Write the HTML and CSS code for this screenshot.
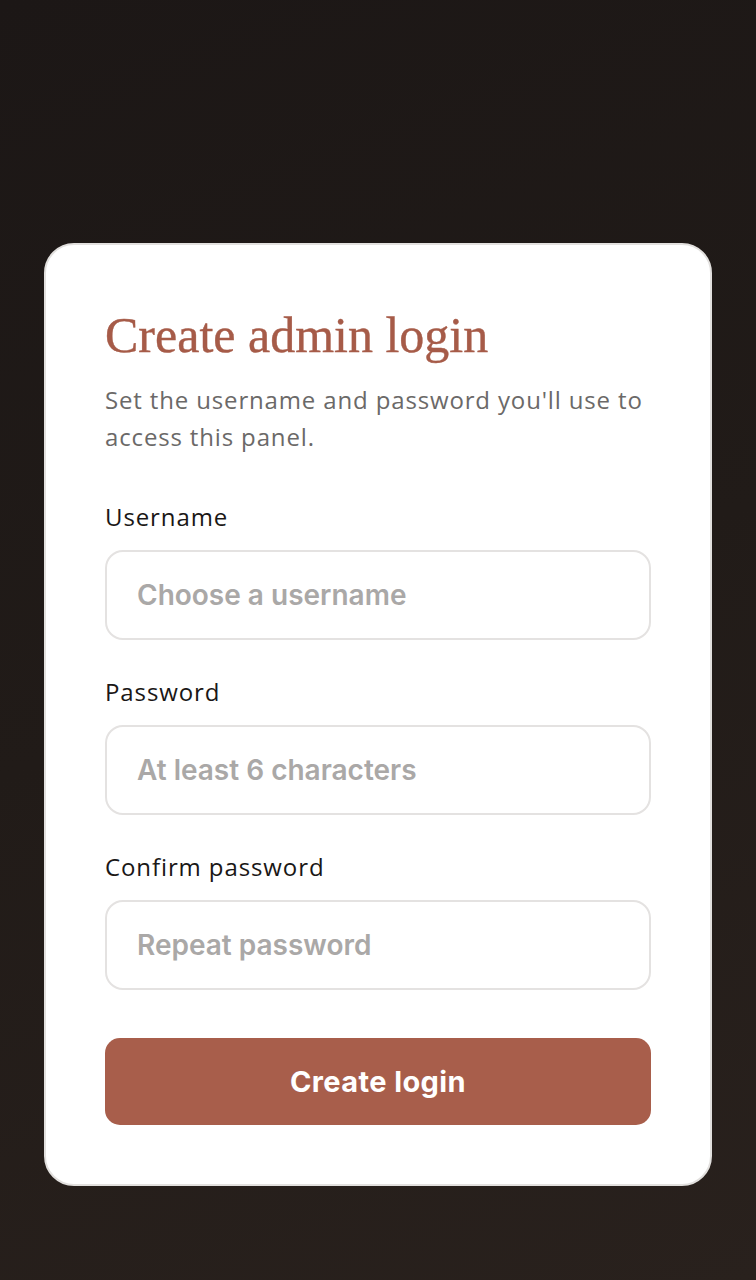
FILE: index.html
```html
<!DOCTYPE html>
<html lang="en">
  <head>
    <meta charset="UTF-8" />
    <meta name="viewport" content="width=device-width, initial-scale=1.0" />
    <title>Create admin login</title>
    <link rel="stylesheet" href="styles.css">
  </head>
  <body class="body">
    <div class="card">
      <h1 class="title">Create admin login</h1>
      <p class="subtitle">Set the username and password you'll use to access this panel.</p>
      <form class="form">
        <div class="field">
          <label for="username" class="label">Username</label>
          <input type="text" id="username" class="input" placeholder="Choose a username">
        </div>
        <div class="field">
          <label for="password" class="label">Password</label>
          <input type="password" id="password" class="input" placeholder="At least 6 characters">
        </div>
        <div class="field">
          <label for="confirm" class="label">Confirm password</label>
          <input type="password" id="confirm" class="input" placeholder="Repeat password">
        </div>
        <button type="submit" class="submit">Create login</button>
      </form>
    </div>
  </body>
</html>
```

FILE: styles.css
```css
.body {
  margin: 0;
  min-height: 1280px;
  background: linear-gradient(160deg, #1c1716 0%, #211b18 50%, #29211d 100%);
  display: flex;
  justify-content: center;
  align-items: flex-start;
  padding-top: 243px;
  box-sizing: border-box;
}
.card {
  width: 668px;
  box-sizing: border-box;
  background-color: #fff;
  border: 2px solid #e2e0de;
  border-radius: 30px;
  padding: 61px 59px 59px;
}
.title {
  margin: 0;
  font-family: "Liberation Serif", serif;
  font-weight: 400;
  font-size: 50px;
  line-height: 58px;
  color: #a65b48;
  -webkit-text-stroke: 0.4px #a65b48;
}
.subtitle {
  margin: 17px 0 0;
  font-family: "Open Sans", sans-serif;
  font-size: 24px;
  letter-spacing: 0.85px;
  line-height: 37px;
  color: #6b6968;
}
.form {
  margin-top: 47px;
  display: flex;
  flex-direction: column;
  gap: 37px;
}
.field {
  display: flex;
  flex-direction: column;
  gap: 18px;
}
.label {
  font-family: "Open Sans", sans-serif;
  font-size: 24px;
  letter-spacing: 0.9px;
  line-height: 30px;
  color: #1a1716;
}
.input {
  height: 90px;
  box-sizing: border-box;
  border: 2px solid #e4e2e1;
  border-radius: 18px;
  padding: 0 30px;
  font-family: Inter, sans-serif;
  font-size: 28px;
  font-weight: 600;
  color: #1a1716;
  outline: none;
}
.input::placeholder {
  color: #aaa8a7;
}
.submit {
  margin-top: 11px;
  height: 87px;
  border: none;
  border-radius: 15px;
  background-color: #a85e4b;
  color: #fff;
  font-family: Inter, sans-serif;
  font-weight: 700;
  font-size: 29px;
  letter-spacing: 0.4px;
}
```
